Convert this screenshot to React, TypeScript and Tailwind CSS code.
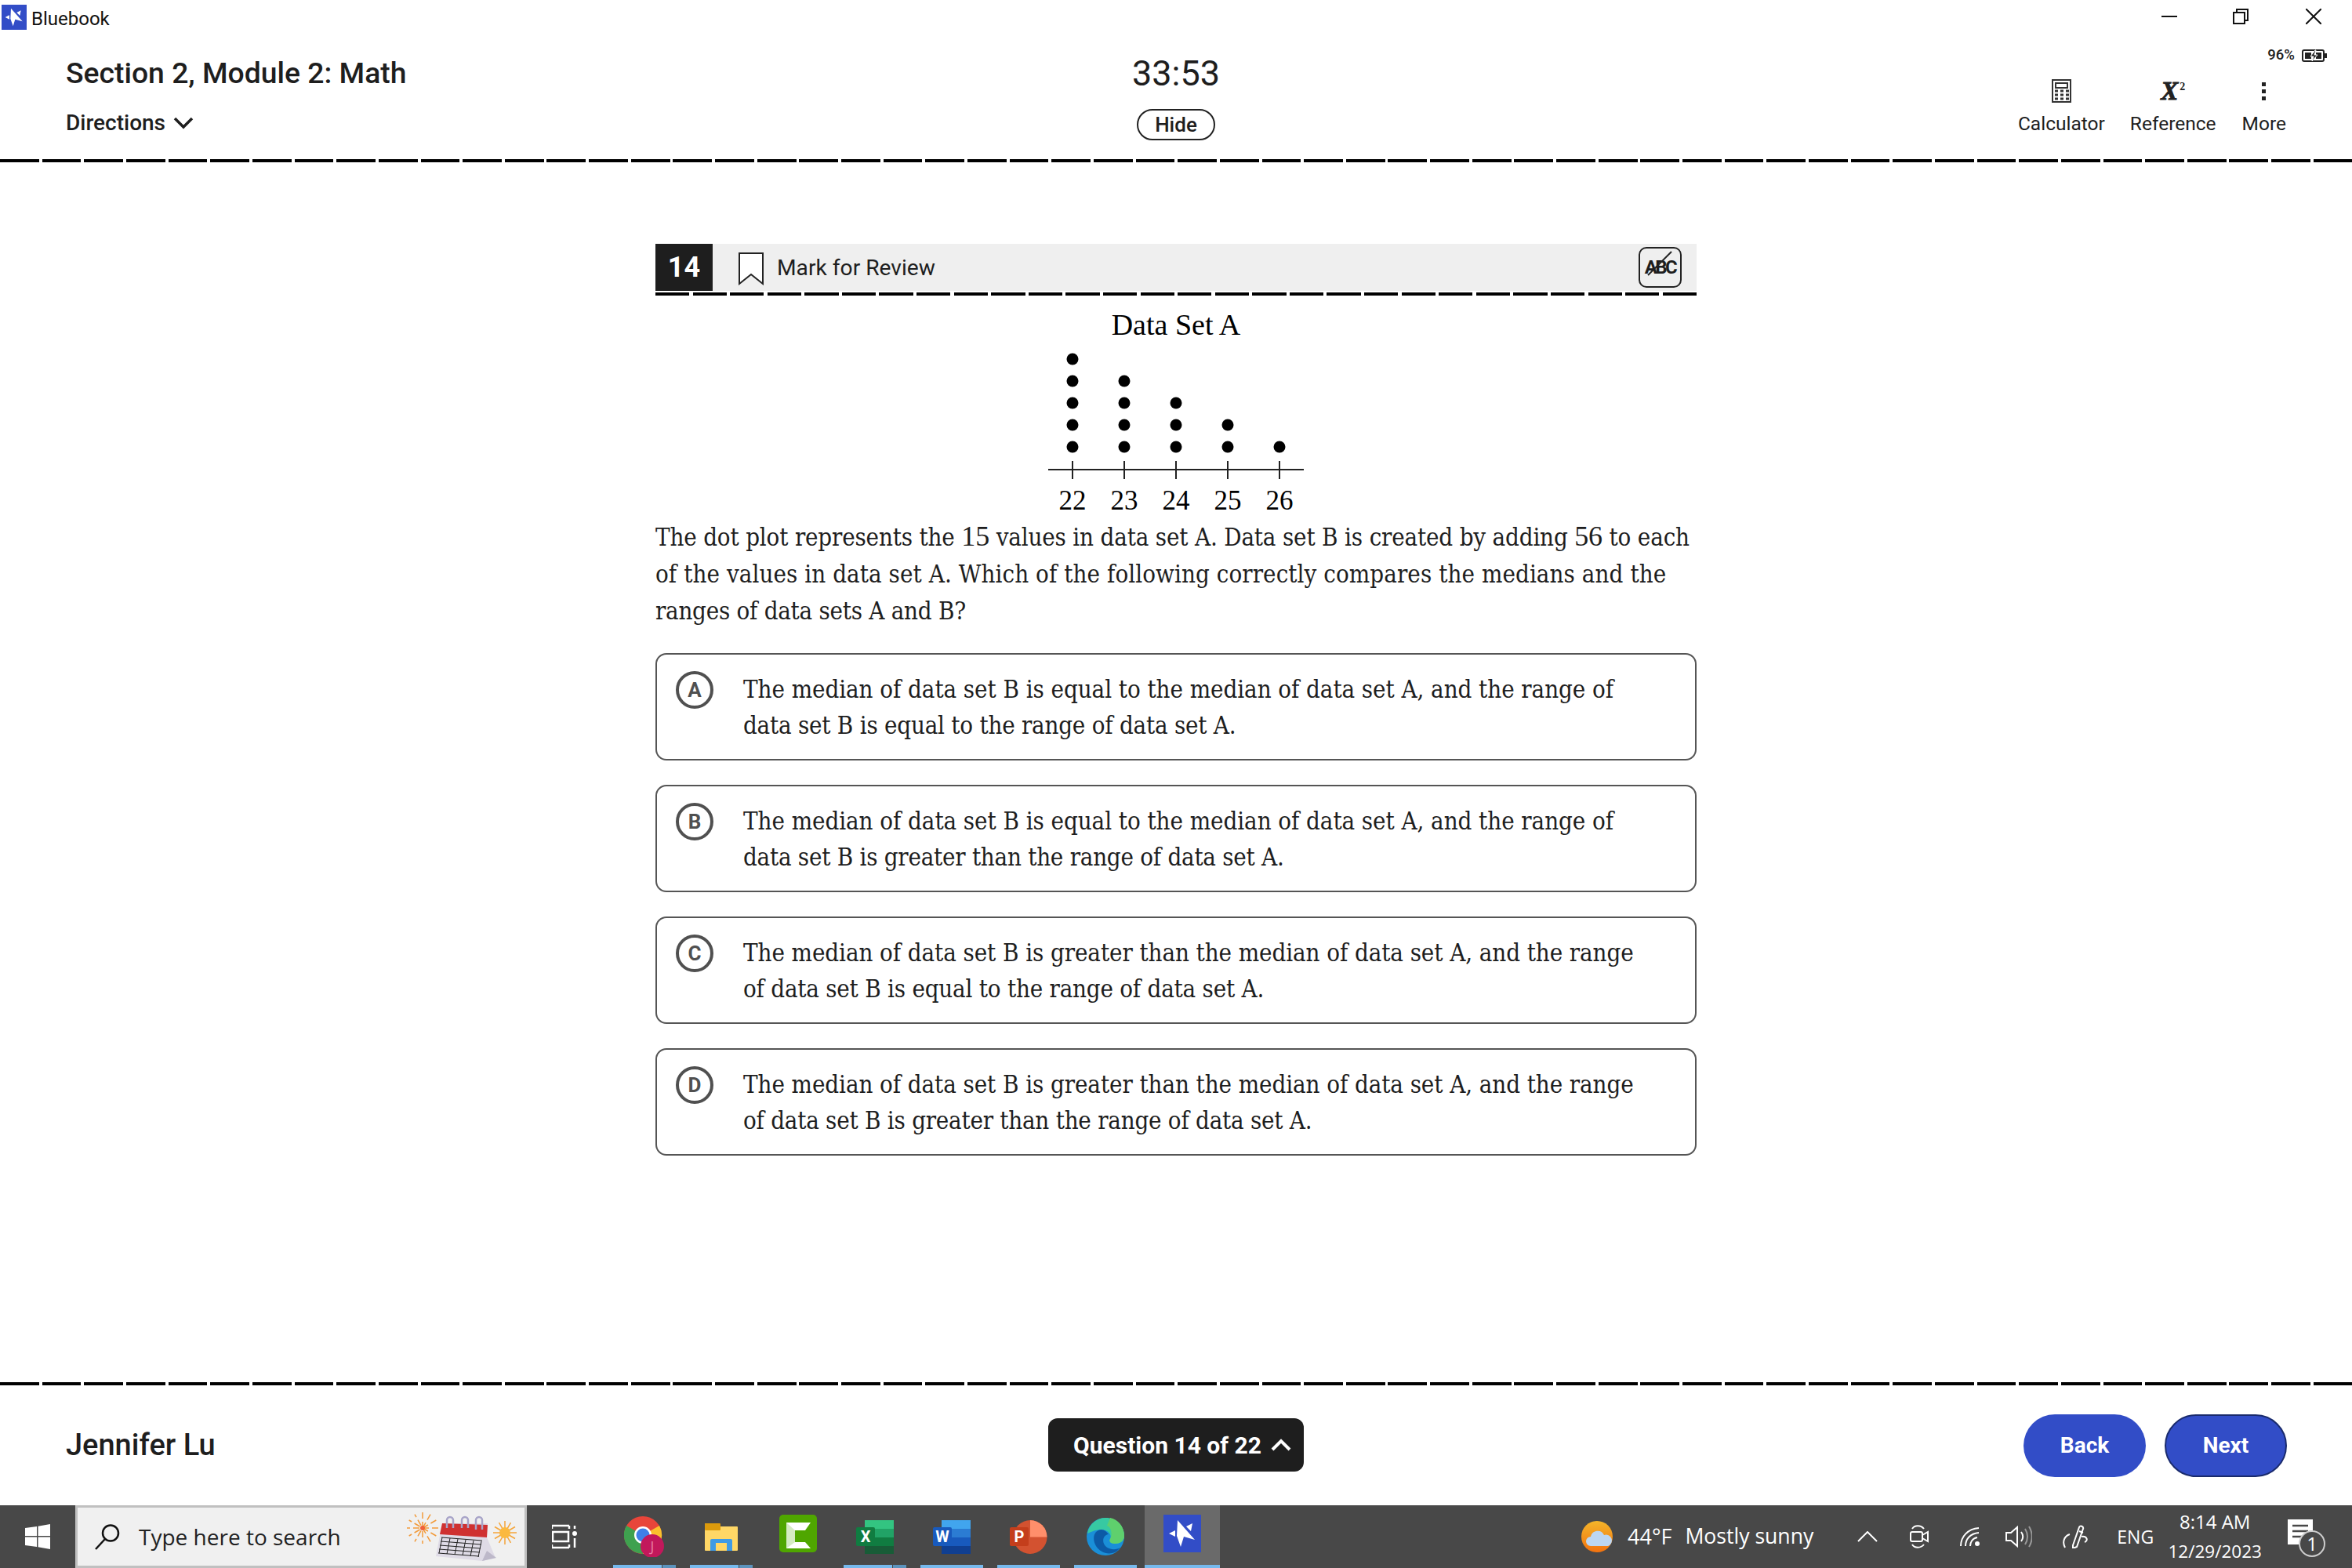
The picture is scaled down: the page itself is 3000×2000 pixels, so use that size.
const SERIF = "font-['DejaVu_Serif_Condensed','DejaVu_Serif',serif]";
const Dashes = () => <div className="h-[4px] w-full bg-[repeating-linear-gradient(90deg,#000_0,#000_49.8px,transparent_49.8px,transparent_53.65px)]" />;

const Logo = ({ size, className = "" }: { size: number; className?: string }) => (
  <svg width={size} height={size} viewBox="0 0 48 48" className={className}>
    <rect width="48" height="48" fill="#324dc7" />
    <path d="M18 7 L40 32 L26 28 L22 41 L17 27 Z" fill="#fff" />
    <path d="M7 24 L15 20 L15 28 Z M29 15 L37 11 L35 21 Z" fill="#fff" />
  </svg>
);

const options = [
  { l: "A", a: "The median of data set B is equal to the median of data set A, and the range of", ta: "tracking-[-0.07px]", b: "data set B is equal to the range of data set A.", tb: "tracking-[-0.24px]" },
  { l: "B", a: "The median of data set B is equal to the median of data set A, and the range of", ta: "tracking-[-0.07px]", b: "data set B is greater than the range of data set A.", tb: "tracking-[-0.26px]" },
  { l: "C", a: "The median of data set B is greater than the median of data set A, and the range", ta: "tracking-[-0.09px]", b: "of data set B is equal to the range of data set A.", tb: "tracking-[-0.23px]" },
  { l: "D", a: "The median of data set B is greater than the median of data set A, and the range", ta: "tracking-[-0.09px]", b: "of data set B is greater than the range of data set A.", tb: "tracking-[-0.25px]" },
];

const Plot = () => {
  const cols = [1368, 1434, 1500, 1566, 1632];
  const counts = [5, 4, 3, 2, 1];
  const ys = [570, 542, 514, 486, 458];
  return (
    <svg width="340" height="274" viewBox="1330 388 340 274" className="h-[274px] w-[340px]">
      <text x="1500" y="427" textAnchor="middle" fontSize="38" fontFamily="Liberation Serif" fill="#000">Data Set A</text>
      {cols.map((x, i) => ys.slice(0, counts[i]).map((y) => <circle key={x + "-" + y} cx={x} cy={y} r="7.5" fill="#000" />))}
      <line x1="1337" x2="1663" y1="599" y2="599" stroke="#222" strokeWidth="2" />
      {cols.map((x, i) => (
        <g key={x}>
          <line x1={x} x2={x} y1="588" y2="611" stroke="#222" strokeWidth="2" />
          <text x={x} y="650" textAnchor="middle" fontSize="35" fontFamily="Liberation Serif" fill="#000">{22 + i}</text>
        </g>
      ))}
    </svg>
  );
};

const TaskIcon = ({ w, children, active, split }: { w: string; children: React.ReactNode; active?: boolean; split?: boolean }) => (
  <div className={`relative flex h-full items-center justify-center ${w} ${active ? "bg-[#6a6a6a]" : ""}`}>
    {children}
    <div className="absolute bottom-0 left-0 flex h-[4px] w-full">
      <div className="flex-1 bg-[#76b9ed]" />
      {split && <div className="ml-[1px] w-[17px] bg-[#5c93bd]" />}
    </div>
  </div>
);

export default function App() {
  return (
    <div className="flex h-[2000px] w-[3000px] flex-col overflow-hidden bg-white font-['Roboto',sans-serif] text-[#1e1e1e]">
      {/* title bar */}
      <div className="flex h-[44px] shrink-0 items-start justify-between">
        <div className="flex items-center pl-[2px] pt-[6px]">
          <Logo size={32} />
          <span className="ml-[6px] translate-y-[2px] text-[24px] leading-[32px] text-[#111]">Bluebook</span>
        </div>
        <div className="flex items-start pt-[11px] pr-[39px]">
          <svg width="20" height="20" viewBox="0 0 20 20" stroke="#111" strokeWidth="2" fill="none"><path d="M0 10H20" /></svg>
          <svg width="20" height="20" viewBox="0 0 20 20" stroke="#111" strokeWidth="2" fill="none" className="ml-[71px]"><path d="M1 5H15V19H1Z M5 5V1H19V15H15" /></svg>
          <svg width="20" height="20" viewBox="0 0 20 20" stroke="#111" strokeWidth="2" fill="none" className="ml-[73px]"><path d="M0 0L20 20M20 0L0 20" /></svg>
        </div>
      </div>
      {/* header */}
      <div className="relative flex h-[159px] shrink-0 justify-between pl-[84px] pr-[84px]">
        <div>
          <div className="mt-[26px] text-[37.3px] font-medium leading-[46px]">Section 2, Module 2: Math</div>
          <div className="mt-[24px] flex items-center text-[28px] font-medium leading-[34px]">
            Directions
            <svg width="26" height="16" viewBox="0 0 26 16" fill="none" stroke="#1e1e1e" strokeWidth="3.5" className="ml-[10px]"><path d="M2 2L13 13L24 2" /></svg>
          </div>
        </div>
        <div className="absolute left-0 top-0 flex w-full flex-col items-center">
          <div className="mt-[20px] text-[45px] font-normal leading-[60px]">33:53</div>
          <div className="mt-[15px] flex h-[40px] w-[100px] items-center justify-center rounded-full border-2 border-[#222] text-[26px] font-medium">Hide</div>
        </div>
        <div className="relative flex items-start">
          <div className="absolute right-[-52px] top-[13px] flex items-center text-[18.5px] font-medium">
            96%
            <svg width="32" height="16" viewBox="0 0 32 16" className="ml-[9px]" fill="none">
              <rect x="1" y="1" width="27" height="14" rx="2" stroke="#222" strokeWidth="2" />
              <rect x="29" y="5" width="3" height="6" fill="#222" />
              <rect x="4" y="4" width="8" height="8" fill="#222" />
              <rect x="18" y="4" width="7" height="8" fill="#222" />
              <path d="M17 1L11 9H15L13 15L20 7H16L18 1Z" fill="#222" stroke="#fff" strokeWidth="1" />
            </svg>
          </div>
          <div className="relative z-10 mt-[57px] flex flex-col items-center">
            <svg width="25" height="30" viewBox="0 0 25 30" className="h-[30px]">
              <rect x="1" y="1" width="23" height="28" fill="none" stroke="#333" strokeWidth="2" />
              <rect x="5" y="5" width="15" height="6" fill="none" stroke="#333" strokeWidth="2" />
              {[14, 19, 24].map((y) => [4, 11, 18].map((x) => <rect key={x + "_" + y} x={x} y={y - 0.5} width="4" height="3" fill="#333" />))}
            </svg>
            <span className="mt-[14px] text-[24.5px] leading-[26px]">Calculator</span>
          </div>
          <div className="relative z-10 ml-[32px] mt-[57px] flex flex-col items-center">
            <div className="flex h-[30px] items-center text-[#222]">
              <span className="font-['Liberation_Serif',serif] text-[33px] font-bold italic leading-[30px] [-webkit-text-stroke:1px_#222]">X</span>
              <span className="mb-[12px] ml-[2px] font-['Liberation_Serif',serif] text-[14px] font-bold leading-[13px]">2</span>
            </div>
            <span className="mt-[14px] text-[24.5px] leading-[26px]">Reference</span>
          </div>
          <div className="relative z-10 ml-[33px] mt-[57px] flex flex-col items-center">
            <div className="flex h-[30px] flex-col items-center justify-center gap-[4px]">
              <div className="size-[5px] bg-[#222]" />
              <div className="size-[5px] bg-[#222]" />
              <div className="size-[5px] bg-[#222]" />
            </div>
            <span className="mt-[14px] text-[24.5px] leading-[26px]">More</span>
          </div>
        </div>
      </div>
      <Dashes />
      {/* main */}
      <div className="flex flex-1 flex-col items-center">
        <div className="mt-[104px] w-[1328px]">
          <div className="flex h-[60px] items-center bg-[#efefef]">
            <div className="flex h-[60px] w-[73px] items-center justify-center bg-[#1e1e1e] text-[36px] font-bold text-white">14</div>
            <svg width="34" height="42" viewBox="0 0 34 42" fill="#fff" stroke="#222" strokeWidth="2" className="ml-[32px] mt-[4px]"><path d="M2 1H32V40L17 28L2 40Z" /></svg>
            <span className="ml-[16px] mt-[2px] text-[28.2px] leading-[34px] text-[#1e1e1e]">Mark for Review</span>
            <div className="ml-auto mr-[19px] flex h-[52px] w-[55px] items-center justify-center rounded-[10px] border-2 border-[#222] text-[24px] font-bold tracking-[-2.5px]">
              <span className="relative">ABC
                <svg width="34" height="34" viewBox="0 0 34 34" className="absolute left-[2px] top-[-4px]" stroke="#222" strokeWidth="2"><path d="M2 32L32 2" /></svg>
              </span>
            </div>
          </div>
          <div className="mt-[2px] h-[4px] w-full bg-[repeating-linear-gradient(90deg,#000_0,#000_43.3px,transparent_43.3px,transparent_47.58px)]" />
          <div className="mt-[11px] flex justify-center"><Plot /></div>
          <div className={`${SERIF} h-[140px] whitespace-nowrap text-[31px] font-stretch-condensed leading-[46.8px] text-[#1e1e1e]`}>
            <div className="tracking-[-0.18px]">The dot plot represents the <span className="font-['Liberation_Serif',serif] text-[36px] leading-none">15</span> values in data set A. Data set B is created by adding <span className="font-['Liberation_Serif',serif] text-[36px] leading-none">56</span> to each</div>
            <div className="tracking-[0.06px]">of the values in data set A. Which of the following correctly compares the medians and the</div>
            <div className="tracking-[-0.27px]">ranges of data sets A and B?</div>
          </div>
          <div className="mt-[31px] flex flex-col gap-[31px]">
            {options.map(({ l, a, ta, b, tb }) => (
              <div key={l} className="flex h-[137px] items-start rounded-[14px] border-2 border-[#555] pl-[24px]">
                <div className="mt-[21px] flex size-[48px] shrink-0 items-center justify-center rounded-full border-[4px] border-[#505050] text-[26px] font-bold text-[#505050]">{l}</div>
                <div className={`${SERIF} ml-[38px] mt-[22px] whitespace-nowrap text-[31px] font-stretch-condensed leading-[45.5px] text-[#1e1e1e]`}>
                  <div className={ta}>{a}</div>
                  <div className={tb}>{b}</div>
                </div>
              </div>
            ))}
          </div>
        </div>
      </div>
      <Dashes />
      {/* footer */}
      <div className="relative flex h-[153px] shrink-0 items-center justify-between pl-[84px] pr-[83px]">
        <div className="text-[38px] font-medium">Jennifer Lu</div>
        <div className="absolute left-[1337px] top-[42px] flex h-[68px] w-[326px] items-center justify-center rounded-[12px] bg-[#1e1e1e] pl-[16px] text-[30px] font-bold text-white">
          Question 14 of 22
          <svg width="26" height="16" viewBox="0 0 26 16" fill="none" stroke="#fff" strokeWidth="4" className="ml-[12px]"><path d="M2 14L13 3L24 14" /></svg>
        </div>
        <div className="flex gap-[24px]">
          <div className="flex h-[80px] w-[156px] items-center justify-center rounded-full bg-[#324dc7] text-[28px] font-bold text-white">Back</div>
          <div className="flex h-[80px] w-[156px] items-center justify-center rounded-full border-2 border-[#1a2b6d] bg-[#324dc7] text-[28px] font-bold text-white">Next</div>
        </div>
      </div>
      {/* taskbar */}
      <div className="flex h-[80px] shrink-0 items-center bg-[#484848] font-['Open_Sans',sans-serif] text-white">
        <div className="flex h-full w-[96px] items-center justify-center">
          <svg width="32" height="32" viewBox="0 0 32 32" fill="#fff"><path d="M0 5L15 3V15H0Z M16.5 2.8L32 0V15H16.5Z M0 16.5H15V29L0 27Z M16.5 16.5H32V32L16.5 29.2Z" /></svg>
        </div>
        <div className="flex h-full w-[576px] items-center border-[3px] border-[#c0c0c0] bg-[#f0f0f0] pl-[21px] text-[#222]">
          <svg width="34" height="34" viewBox="0 0 34 34" fill="none" stroke="#111" strokeWidth="2.5"><circle cx="21" cy="12.5" r="10" /><path d="M14 20L2 33" /></svg>
          <span className="ml-[23px] text-[28px] leading-[40px]">Type here to search</span>
          <svg width="145" height="70" viewBox="0 0 145 70" className="ml-auto mr-[6px]">
            <g stroke="#f29a3a" strokeWidth="1.5">
              {[0, 30, 60, 90, 120, 150].map((a) => <line key={a} x1="21" y1="4" x2="21" y2="44" transform={`rotate(${a} 21 24)`} strokeDasharray="8 4" />)}
            </g>
            <circle cx="21" cy="24" r="3" fill="#f0603a" />
            <g stroke="#f4a53a" strokeWidth="1.5">
              {[0, 30, 60, 90, 120, 150].map((a) => <line key={a} x1="126" y1="15" x2="126" y2="45" transform={`rotate(${a} 126 30)`} />)}
            </g>
            <circle cx="126" cy="30" r="7" fill="#fbb93f" />
            <path d="M38 60L46 18L104 18L103 36L114 62L97 66Z" fill="#dfdbe6" />
            <path d="M103 53L115 62L97 66Z" fill="#bdb8c9" />
            <path d="M46 18L104 20L103 36L43 32Z" fill="#cf3131" />
            <g stroke="#222" strokeWidth="1" fill="none">
              {[0, 1, 2, 3, 4].map((i) => <path key={i} d={`M${45 - i} ${36 + i * 5}L${97 - i} ${40 + i * 5}`} />)}
              {[0, 1, 2, 3, 4, 5].map((i) => <path key={i} d={`M${46 + i * 10} ${36 + i}L${42 + i * 10} ${56 + i}`} />)}
            </g>
            <g stroke="#a8a4c8" strokeWidth="2.5" fill="none">
              <path d="M52 24V14a4 4 0 0 1 8 0V24" /><path d="M71 24V14a4 4 0 0 1 8 0V24" /><path d="M89 26V14a4 4 0 0 1 8 0V26" />
            </g>
          </svg>
        </div>
        <div className="ml-[32px] w-[32px]">
          <svg width="32" height="32" viewBox="0 0 32 32" fill="none" stroke="#fff" strokeWidth="2.5"><path d="M0 2H22M0 2V6M22 2V6M0 30H22M0 30V26M22 30V26" /><rect x="1" y="10" width="20" height="12" /><circle cx="29" cy="12" r="3" fill="#fff" stroke="none" /><path d="M29 18V30M29 2V6" /></svg>
        </div>
        <div className="ml-[46px] flex h-full">
          <TaskIcon w="w-[80px]" split>
            <svg width="52" height="52" viewBox="0 0 52 52">
              <circle cx="24" cy="24" r="24" fill="#e8453a" />
              <path d="M24 24L45 12A24 24 0 0 1 24 48Z" fill="#fbc02d" />
              <path d="M24 24L3 12A24 24 0 0 0 24 48Z" fill="#3fa14f" />
              <circle cx="24" cy="24" r="11" fill="#fff" /><circle cx="24" cy="24" r="8.5" fill="#3f7fe8" />
              <circle cx="36" cy="38" r="15" fill="#c2185b" />
              <text x="36" y="45" textAnchor="middle" fontSize="18" fill="#e77ba6" fontFamily="Open Sans">J</text>
            </svg>
          </TaskIcon>
          <div className="w-[18px]" />
          <TaskIcon w="w-[80px]" split>
            <svg width="42" height="35" viewBox="0 0 42 35">
              <path d="M0 0H18L20 4H0Z" fill="#e3a008" />
              <rect y="4" width="42" height="31" rx="1" fill="#ffd766" />
              <rect y="0" width="20" height="9" rx="1" fill="#dc9a0c" />
              <path d="M7 35V22a2 2 0 0 1 2-2H33a2 2 0 0 1 2 2V35H28V25H14V35Z" fill="#3f9be5" />
            </svg>
          </TaskIcon>
          <div className="w-[18px]" />
          <div className="flex h-full w-[80px] items-center justify-center pb-[8px]">
            <svg width="48" height="48" viewBox="0 0 48 48">
              <rect width="48" height="48" rx="5" fill="#4fa600" />
              <path d="M9 10H40L33 20H20V35H33L40 43H9Z" fill="#fff" />
              <path d="M9 10L20 20V35L9 43Z" fill="#d5ebc4" />
            </svg>
          </div>
          <div className="w-[18px]" />
          <TaskIcon w="w-[80px]" split>
            <OfficeIcon colors={["#33c481", "#21a366", "#107c41", "#185c37"]} tile="#107c41" letter="X" />
          </TaskIcon>
          <div className="w-[18px]" />
          <TaskIcon w="w-[80px]">
            <OfficeIcon colors={["#41a5ee", "#2b7cd3", "#185abd", "#103f91"]} tile="#185abd" letter="W" />
          </TaskIcon>
          <div className="w-[18px]" />
          <TaskIcon w="w-[80px]">
            <svg width="48" height="43" viewBox="0 0 48 43">
              <circle cx="26" cy="21.5" r="21.5" fill="#d35230" />
              <path d="M26 0A21.5 21.5 0 0 1 47.5 21.5H26Z" fill="#ff8f6b" />
              <rect y="9" width="24" height="24" rx="2" fill="#c43e1c" />
              <text x="12" y="28" textAnchor="middle" fontSize="20" fontWeight="700" fill="#fff" fontFamily="Roboto">P</text>
            </svg>
          </TaskIcon>
          <div className="w-[18px]" />
          <TaskIcon w="w-[80px]">
            <svg width="48" height="48" viewBox="0 0 48 48">
              <circle cx="24" cy="24" r="24" fill="#1a8fd8" />
              <path d="M1 20C3 7 14 0 24 0C38 0 48 10 48 23C48 30 42 33 36 33C31 33 28 30 30 27C33 22 27 15 19 15C10 15 4 19 1 20Z" fill="#37c9a2" />
              <path d="M30 0C40 2 48 11 48 23C48 30 42 33 36 33C31 33 28 30 30 27C33 22 32 12 26 10Z" fill="#5fd06d" />
              <path d="M19 15C10 15 6 26 12 36C18 46 34 50 43 38C38 41 30 41 25 37C19 32 20 22 28 21C25 17 22 15 19 15Z" fill="#0c5aa6" />
            </svg>
          </TaskIcon>
          <div className="w-[10px]" />
          <TaskIcon w="w-[96px]" active><div className="mb-[8px]"><Logo size={48} /></div></TaskIcon>
        </div>
        <div className="ml-[461px] flex h-full items-center">
          <svg width="40" height="40" viewBox="0 0 40 40">
            <defs><linearGradient id="sun" x1="0" y1="0" x2="0" y2="1"><stop offset="0" stopColor="#f4b52a" /><stop offset="1" stopColor="#f2720f" /></linearGradient></defs>
            <circle cx="20" cy="20" r="20" fill="url(#sun)" />
            <path d="M12 32a6 6 0 0 1 0-12a9 9 0 0 1 17-2a7 7 0 0 1 5 14Z" fill="#bcd6f2" />
          </svg>
          <span className="ml-[19px] text-[27px]">44°F</span>
          <span className="ml-[17px] text-[26.6px]">Mostly sunny</span>
        </div>
        <svg width="26" height="14" viewBox="0 0 26 14" fill="none" stroke="#fff" strokeWidth="2" className="ml-[56px]"><path d="M1 13L13 1L25 13" /></svg>
        <svg width="24" height="30" viewBox="0 0 24 30" fill="none" stroke="#fff" strokeWidth="2" className="ml-[41px]"><path d="M3 5C6 0 14 0 18 5M3 25C6 30 14 30 18 25" /><rect x="1" y="9" width="15" height="12" rx="2" /><path d="M16 13L23 9V21L16 17" /></svg>
        <svg width="26" height="24" viewBox="0 0 26 24" fill="none" stroke="#fff" strokeWidth="2" className="ml-[40px]"><path d="M1 24C1 12 10 2 24 1M7 24C7 15 13 8 24 7M13 24C13 19 16 14 22 13" /><circle cx="22" cy="21" r="3" fill="#fff" stroke="none" /></svg>
        <svg width="34" height="30" viewBox="0 0 34 30" fill="none" stroke="#fff" strokeWidth="2" className="ml-[32px]"><path d="M1 10H7L15 3V27L7 20H1Z" /><path d="M20 9C23 13 23 17 20 21" /><path d="M25 5C29 11 29 19 25 25M30 2C35 10 35 20 30 28" stroke="#999" /></svg>
        <svg width="36" height="30" viewBox="0 0 36 30" fill="none" stroke="#fff" strokeWidth="2" className="ml-[38px]"><path d="M14 26L22 3C23 0 28 2 27 5L19 28L14 30Z" /><path d="M22 8L27 10M10 12C3 14 0 22 4 29M25 15C32 14 34 20 29 22" /></svg>
        <span className="ml-[34px] text-[23px]">ENG</span>
        <div className="ml-[18px] flex w-[120px] flex-col items-center text-[24px] leading-[38px]">
          <span>8:14 AM</span>
          <span className="text-[22.5px]">12/29/2023</span>
        </div>
        <div className="relative ml-[33px] h-[52px] w-[48px]">
          <svg width="32" height="52" viewBox="0 0 32 52"><path d="M0 4H32V36H0Z" fill="#fff" /><path d="M6 12H26M6 19H26M6 26H20" stroke="#484848" strokeWidth="2.5" /></svg>
          <div className="absolute bottom-0 right-[0px] flex size-[34px] items-center justify-center rounded-full border-2 border-[#ccc] bg-[#484848] text-[24px] leading-none">1</div>
        </div>
      </div>
    </div>
  );
}

function OfficeIcon({ colors, tile, letter }: { colors: string[]; tile: string; letter: string }) {
  return (
    <svg width="48" height="43" viewBox="0 0 48 43">
      <rect x="11" y="0" width="37" height="11" fill={colors[0]} />
      <rect x="11" y="11" width="37" height="11" fill={colors[1]} />
      <rect x="11" y="22" width="37" height="11" fill={colors[2]} />
      <rect x="11" y="33" width="37" height="10" fill={colors[3]} />
      <rect x="0" y="9" width="24" height="24" rx="2" fill={tile} />
      <text x="12" y="28" textAnchor="middle" fontSize="20" fontWeight="700" fill="#fff" fontFamily="Roboto">{letter}</text>
    </svg>
  );
}
